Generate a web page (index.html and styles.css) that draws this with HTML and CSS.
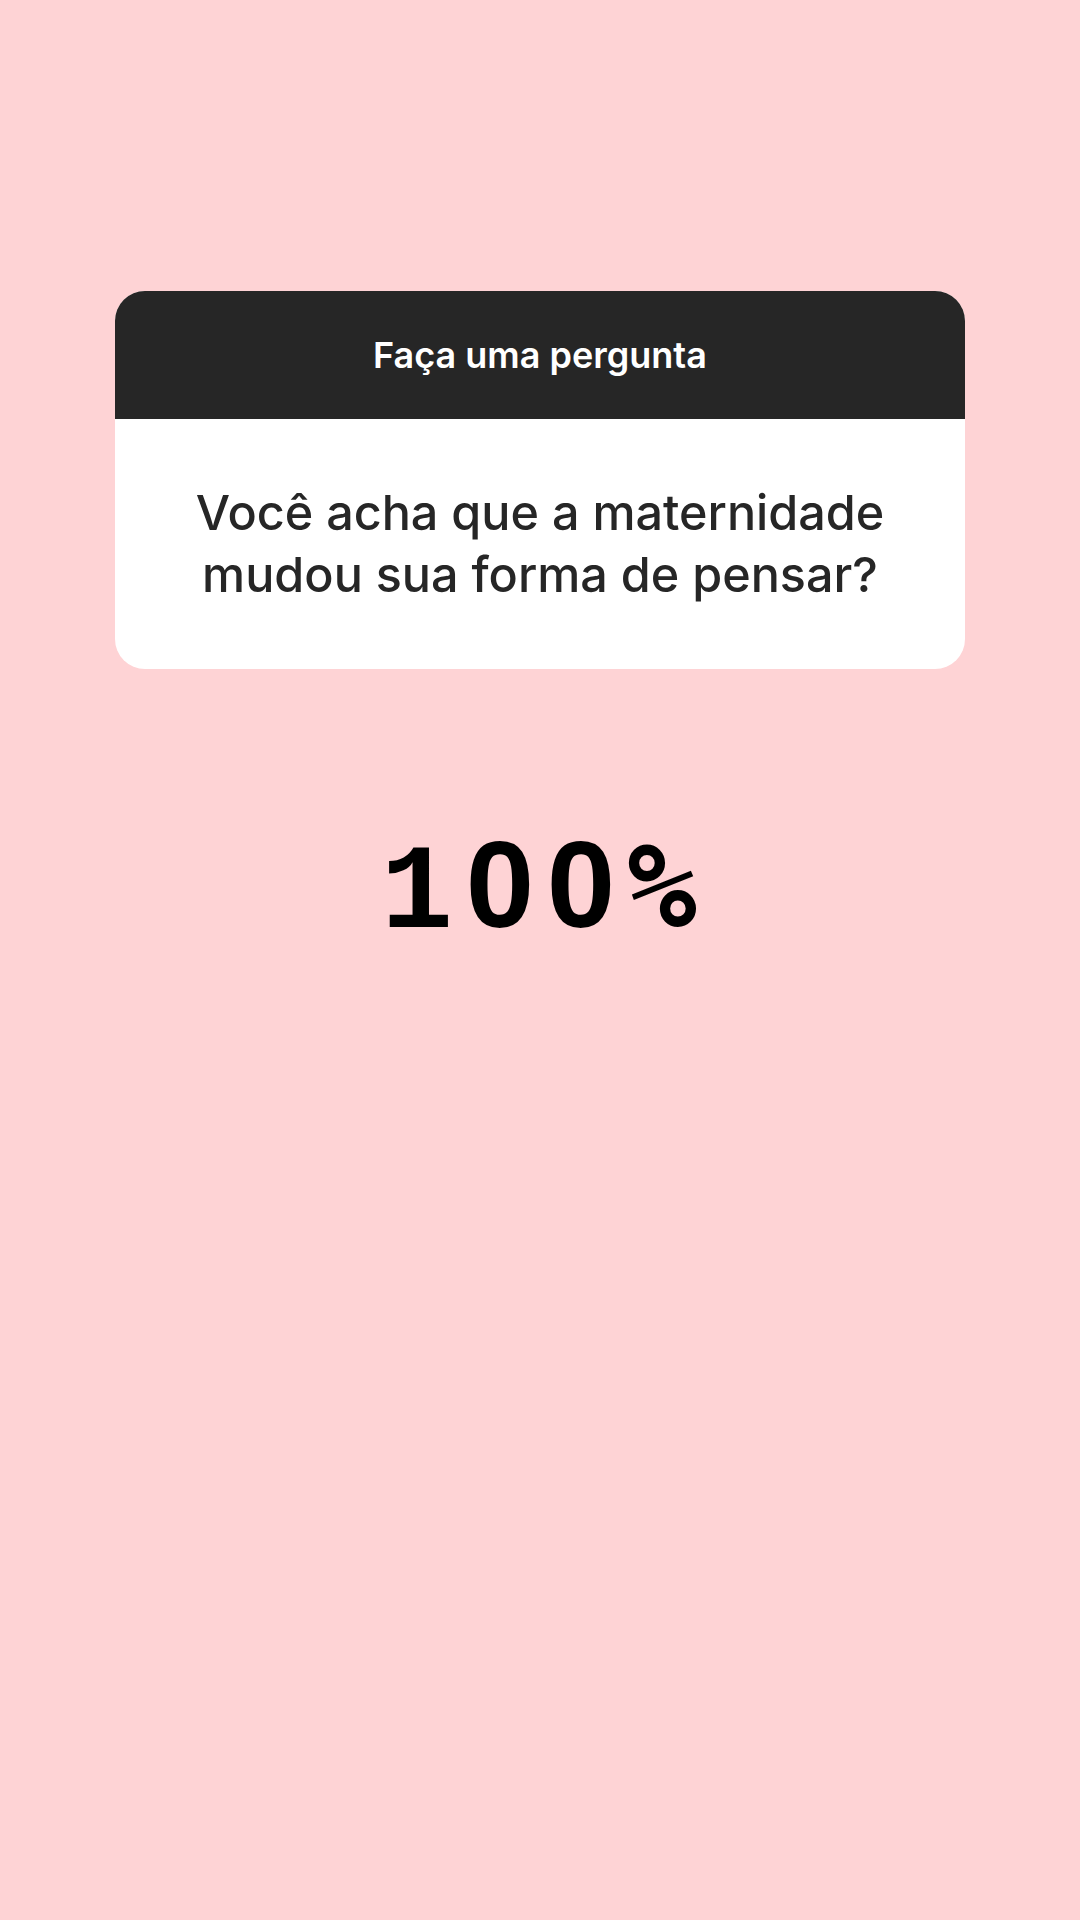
FILE: index.html
```html
<!DOCTYPE html>
<html lang="pt">
<head>
<meta charset="utf-8">
<link rel="stylesheet" href="styles.css">
</head>
<body>
<main class="page">
  <section class="card">
    <header class="card-head">Faça uma pergunta</header>
    <div class="card-body">
      <p class="question">Você acha que a maternidade mudou sua forma de pensar?</p>
    </div>
  </section>
  <div class="percent" aria-label="100%"><span class="ch one">1</span><span class="ch zero">0</span><span class="ch zero">0</span><span class="ch pct">%</span></div>
</main>
</body>
</html>
```
FILE: styles.css
```css
html, body {
  margin: 0;
  padding: 0;
  background: #fed3d5;
}
.page {
  width: 1080px;
  height: 1920px;
  box-sizing: border-box;
  padding-top: 291px;
  display: flex;
  flex-direction: column;
  align-items: center;
  font-family: Inter, "Liberation Sans", sans-serif;
}
.card {
  width: 850px;
  border-radius: 30px;
  overflow: hidden;
  background: #ffffff;
}
.card-head {
  height: 128px;
  background: #262626;
  color: #ffffff;
  font-size: 36px;
  font-weight: 600;
  display: flex;
  align-items: center;
  justify-content: center;
}
.card-body {
  height: 250px;
  display: flex;
  align-items: center;
  justify-content: center;
}
.question {
  margin: 0;
  width: 760px;
  text-align: center;
  color: #262626;
  font-size: 48.5px;
  font-weight: 500;
  line-height: 62px;
}
.percent {
  margin-top: 146px;
  margin-left: 1px;
  display: flex;
  align-items: baseline;
  line-height: 140px;
  color: #000000;
}
.ch {
  width: 81px;
  text-align: center;
}
.one {
  font-family: "Liberation Mono", monospace;
  font-weight: 700;
  font-size: 120px;
  text-indent: -4px;
}
.zero {
  font-family: "Liberation Sans", sans-serif;
  font-weight: 700;
  font-size: 123px;
}
.pct {
  font-family: "DejaVu Sans Mono", monospace;
  font-weight: 700;
  font-size: 116px;
  transform: scaleY(1.02);
  transform-origin: 50% 79%;
}
```
